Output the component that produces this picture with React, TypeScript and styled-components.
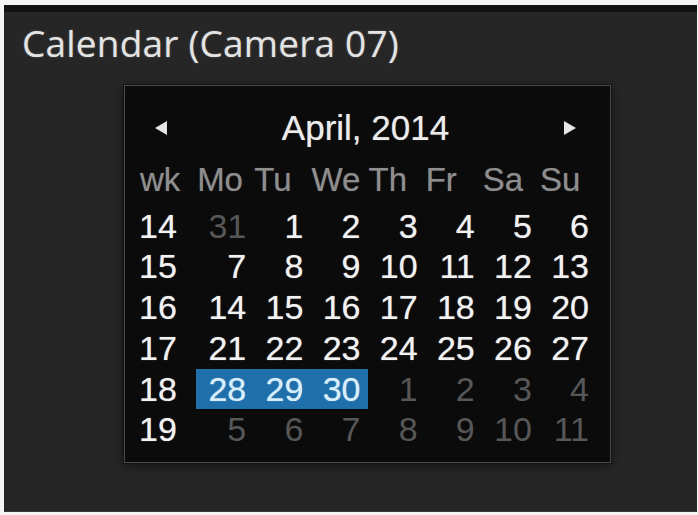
import React from "react";
import styled, { createGlobalStyle } from "styled-components";

const Global = createGlobalStyle`
  html, body { margin: 0; padding: 0; background: #ffffff; }
  * { box-sizing: border-box; }
`;

const Frame = styled.div`
  width: 698px;
  height: 515px;
  padding: 5px 1px 3px 4px;
  display: flex;
  background: #f4f4f4;
`;

const Window = styled.div`
  flex: 1;
  display: flex;
  flex-direction: column;
  background: #262626;
  border-top: 7px solid #121212;
  border-bottom: 1px solid #3a3a3a;
`;

const Title = styled.div`
  padding: 7px 0 0 18px;
  height: 55px;
  line-height: 48px;
  font-family: "Open Sans", "Liberation Sans", sans-serif;
  font-size: 37px;
  color: #e4e4e4;
  letter-spacing: 0.2px;
  text-shadow: 0 0 2px rgba(255, 255, 255, 0.3);
`;

const Calendar = styled.div`
  margin: 18px 0 0 120px;
  width: 487px;
  height: 378px;
  background: #0b0b0b;
  border: 1px solid #4a4a4a;
  box-shadow: 0 0 0 1px #141414, 0 2px 10px rgba(0, 0, 0, 0.6);
  padding: 20px 14px 12px;
  font-family: "Liberation Sans", Arial, sans-serif;
  display: flex;
  flex-direction: column;
`;

const NavRow = styled.div`
  height: 44px;
  display: grid;
  grid-template-columns: 1fr auto 1fr;
  align-items: center;
  padding: 0 17px 0 13px;
`;

const Arrow = styled.button<{ $side: "left" | "right" }>`
  justify-self: ${(p) => (p.$side === "left" ? "start" : "end")};
  background: none;
  border: none;
  padding: 0;
  width: 18px;
  height: 18px;
  display: flex;
  align-items: center;
  justify-content: center;
`;

const MonthLabel = styled.div`
  font-size: 35px;
  color: #ececec;
  line-height: 44px;
  text-shadow: 0 0 1px rgba(255, 255, 255, 0.5);
`;

const Grid = styled.div`
  margin-top: 10px;
  display: grid;
  grid-template-columns: repeat(8, 1fr);
  grid-template-rows: 45.5px repeat(6, 40.8px);
`;

const HeadCell = styled.div`
  align-self: start;
  height: 40px;
  line-height: 40px;
  font-size: 33px;
  color: #8e8e8e;
  padding-left: 1px;
  white-space: nowrap;
  text-shadow: 0 0 1px rgba(150, 150, 150, 0.5);
`;

const WeekCell = styled.div`
  line-height: 40.8px;
  font-size: 34px;
  color: #f2f2f2;
  text-shadow: 0 0 1px rgba(255, 255, 255, 0.6);
`;

const DayCell = styled.div<{ $muted?: boolean; $selected?: boolean }>`
  line-height: 40.8px;
  font-size: 34px;
  text-align: right;
  padding-right: 7px;
  color: ${(p) => (p.$selected ? "#d8eefb" : p.$muted ? "#575757" : "#f2f2f2")};
  background: ${(p) => (p.$selected ? "#1f6fab" : "transparent")};
  text-shadow: ${(p) => (p.$muted ? "none" : "0 0 1px rgba(255, 255, 255, 0.6)")};
`;

type Day = { n: number; muted?: boolean; selected?: boolean };

const weeks: { wk: number; days: Day[] }[] = [
  { wk: 14, days: [{ n: 31, muted: true }, { n: 1 }, { n: 2 }, { n: 3 }, { n: 4 }, { n: 5 }, { n: 6 }] },
  { wk: 15, days: [7, 8, 9, 10, 11, 12, 13].map((n) => ({ n })) },
  { wk: 16, days: [14, 15, 16, 17, 18, 19, 20].map((n) => ({ n })) },
  { wk: 17, days: [21, 22, 23, 24, 25, 26, 27].map((n) => ({ n })) },
  {
    wk: 18,
    days: [
      { n: 28, selected: true },
      { n: 29, selected: true },
      { n: 30, selected: true },
      { n: 1, muted: true },
      { n: 2, muted: true },
      { n: 3, muted: true },
      { n: 4, muted: true },
    ],
  },
  { wk: 19, days: [5, 6, 7, 8, 9, 10, 11].map((n) => ({ n, muted: true })) },
];

const heads = ["wk", "Mo", "Tu", "We", "Th", "Fr", "Sa", "Su"];

const Tri = ({ dir }: { dir: "left" | "right" }) => (
  <svg width="16" height="18" viewBox="0 0 16 18">
    {dir === "left" ? (
      <polygon points="14,2 14,16 2,9" fill="#e6e6e6" />
    ) : (
      <polygon points="2,2 2,16 14,9" fill="#e6e6e6" />
    )}
  </svg>
);

export default function App() {
  return (
    <>
      <Global />
      <Frame>
        <Window>
          <Title>Calendar (Camera 07)</Title>
          <Calendar>
            <NavRow>
              <Arrow $side="left">
                <Tri dir="left" />
              </Arrow>
              <MonthLabel>April, 2014</MonthLabel>
              <Arrow $side="right">
                <Tri dir="right" />
              </Arrow>
            </NavRow>
            <Grid>
              {heads.map((h) => (
                <HeadCell key={h}>{h}</HeadCell>
              ))}
              {weeks.map((w) => (
                <React.Fragment key={w.wk}>
                  <WeekCell>{w.wk}</WeekCell>
                  {w.days.map((d, i) => (
                    <DayCell key={i} $muted={d.muted} $selected={d.selected}>
                      {d.n}
                    </DayCell>
                  ))}
                </React.Fragment>
              ))}
            </Grid>
          </Calendar>
        </Window>
      </Frame>
    </>
  );
}
